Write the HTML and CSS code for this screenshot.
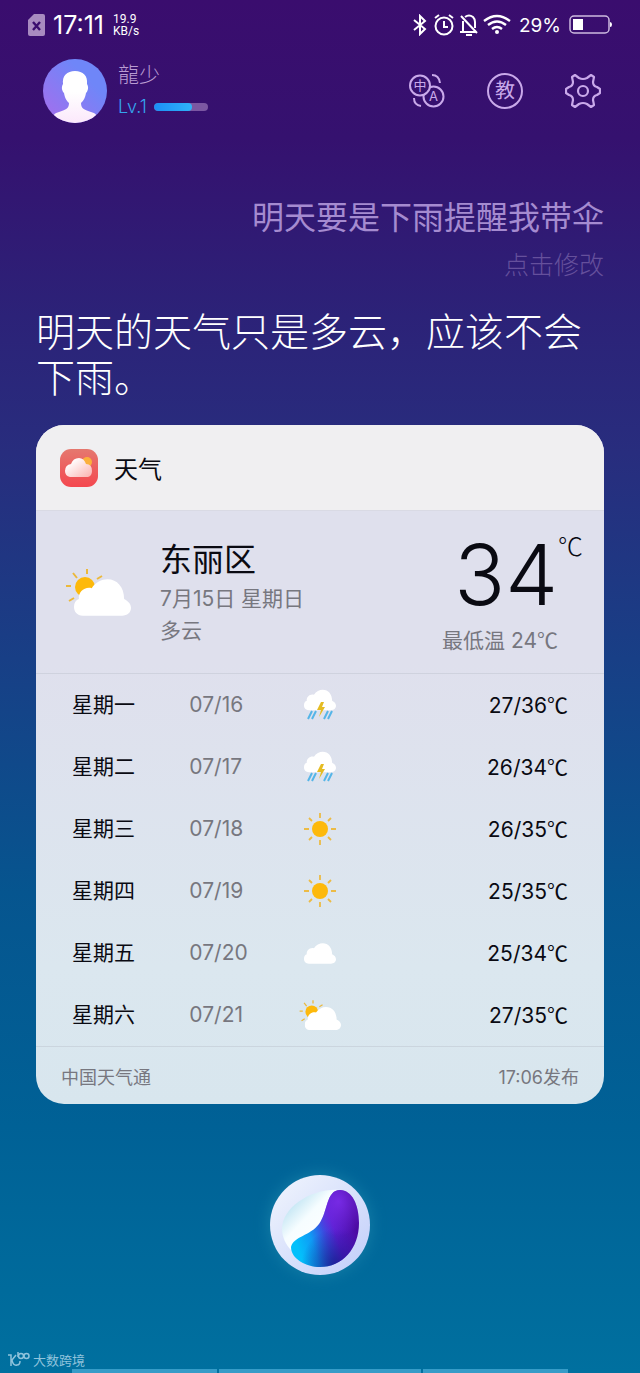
FILE: index.html
```html
<!DOCTYPE html>
<html lang="zh-CN">
<head>
    <meta charset="UTF-8">
    <meta name="viewport" content="width=device-width, initial-scale=1">
    <title>天气</title>
    <link rel="stylesheet" href="styles.css">
</head>
<body>

<!-- shared weather icons -->
<svg class="defs" width="0" height="0" aria-hidden="true">
    <defs>
        <symbol id="cloud" viewBox="0 0 58 37">
            <path fill="#fff" d="M9 37C3 37 0 33 0 28C0 24 2 21 5 20C4 13 11 7 18 9C22 3 28 0 34 0C44 0 51 8 51 20C55 22 58 25 58 29C58 34 54 37 49 37Z"/>
        </symbol>
        <symbol id="sunny" viewBox="0 0 32 32">
            <circle cx="16" cy="16" r="8" fill="#fdb90b"/>
            <path d="M16 0V5M16 27V32M0 16H5M27 16H32M5 5L8 8M24 24L27 27M5 27L8 24M24 8L27 5" stroke="#ecbb45" stroke-width="1.8" fill="none"/>
        </symbol>
        <symbol id="partly" viewBox="0 0 66 48">
            <circle cx="20" cy="19" r="10" fill="#fdb90b"/>
            <path d="M22 1V6M8 5L12 10M1 18H6M4 33L9 30M32 11L37 8" stroke="#ecb93c" stroke-width="2" fill="none"/>
            <use href="#cloud" x="9" y="11" width="57" height="37"/>
        </symbol>
        <symbol id="storm" viewBox="0 0 32 32">
            <use href="#cloud" x="0" y="0" width="32" height="22"/>
            <path d="M8 22L4 30M12 22L8 30M24 22L20 30M28 22L24 30" stroke="#55b5e8" stroke-width="2" fill="none"/>
            <path d="M17 13H20L18 18H21L15 28L17 21H13Z" fill="#e5bc22"/>
        </symbol>
    </defs>
</svg>

<div class="screen">
    <div class="status">
        <svg width="17" height="22" viewBox="0 0 17 22">
            <path fill="#a88bc0" d="M6 0H15Q17 0 17 2V20Q17 22 15 22H2Q0 22 0 20V6Z"/>
            <path d="M5 8L12 16M12 8L5 16" stroke="#3a0d6e" stroke-width="2.4"/>
        </svg>
        <span class="time">17:11</span>
        <div class="speed">
            <div>19.9</div>
            <div>KB/s</div>
        </div>
        <div class="signals">
            <svg width="16" height="22" viewBox="0 0 16 22" fill="none" stroke="#fff" stroke-width="2">
                <path d="M2 6L13 15L8 20V2L13 7L2 16"/>
            </svg>
            <svg width="22" height="22" viewBox="0 0 22 22" fill="none" stroke="#fff" stroke-width="2">
                <circle cx="11" cy="12" r="8.5"/>
                <path d="M11 7V13H15M2 4L6 1M20 4L16 1"/>
            </svg>
            <svg width="18" height="22" viewBox="0 0 18 22" fill="none" stroke="#fff" stroke-width="2">
                <path d="M0 18H16M3 18V7M5 3Q9 0 13 3Q15 5 15 8V14M1 2L17 19"/>
                <path d="M6 21H12"/>
            </svg>
            <svg width="28" height="22" viewBox="0 0 28 22" fill="none" stroke="#fff" stroke-width="2.4">
                <path d="M1 7Q14 -3 27 7M5 11Q14 4 23 11M9 15Q14 11 19 15"/>
                <circle cx="14" cy="18" r="2" fill="#fff" stroke="none"/>
            </svg>
            <span class="percent">29%</span>
            <svg width="44" height="20" viewBox="0 0 44 20">
                <rect x="1" y="1" width="39" height="17" rx="4" fill="none" stroke="#cdbbe0" stroke-width="1.5"/>
                <rect x="4" y="4" width="10" height="11" fill="#fff"/>
                <path d="M41 7Q43 7 43 9.500Q43 12 41 12Z" fill="#fff"/>
            </svg>
        </div>
    </div>

    <div class="header">
        <svg class="avatar" width="64" height="64" viewBox="0 0 64 64">
            <defs>
                <linearGradient id="face" x1="0" y1="1" x2="1" y2="0">
                    <stop offset="0.1" stop-color="#a070ee"/>
                    <stop offset="0.7" stop-color="#6f86f8"/>
                </linearGradient>
                <linearGradient id="body" x1="0" y1="0" x2="0" y2="1">
                    <stop offset="0.4" stop-color="#fff"/>
                    <stop offset="1" stop-color="#fbe8fb"/>
                </linearGradient>
                <clipPath id="round"><circle cx="32" cy="32" r="32"/></clipPath>
            </defs>
            <g clip-path="url(#round)">
                <rect width="64" height="64" fill="url(#face)"/>
                <path fill="url(#body)" d="M32 12C40 12 45 17 44 25C46 28 45 32 43 34C42 40 40 42 38 44C38 50 42 51 48 53C52 54 55 56 57 64H7C9 56 12 54 16 53C22 51 26 50 26 44C24 42 22 40 21 34C19 32 18 28 20 25C19 17 24 12 32 12Z"/>
            </g>
        </svg>
        <div class="user">
            <div class="name">龍少</div>
            <div class="level">
                <label for="exp">Lv.1</label>
                <progress id="exp" value="70" max="100"></progress>
            </div>
        </div>
        <div class="tools">
            <button type="button" aria-label="翻译">
                <svg width="36" height="36" viewBox="0 0 36 36" fill="none" stroke="#c9a9ea" stroke-width="2">
                    <circle cx="24.500" cy="23.500" r="10"/>
                    <circle cx="11" cy="12.500" r="10" fill="#36116f"/>
                    <path d="M23 2Q30 2 31 10M5 25Q5 32 12 33"/>
                    <text class="glyph" x="11" y="17" font-size="13">中</text>
                    <text class="glyph" x="24.500" y="28" font-size="13">A</text>
                </svg>
            </button>
            <button type="button" class="teach">教</button>
            <button type="button" aria-label="设置">
                <svg width="36" height="36" viewBox="0 0 36 36" fill="none" stroke="#c9a9ea" stroke-width="2.2" stroke-linejoin="round">
                    <path d="M10 2L14 5Q18 7 22 5L26 2L29 4L28 9Q28 13 32 14L35 16V20L32 22Q28 23 28 27L29 32L26 34L22 31Q18 29 14 31L10 34L7 32L8 27Q8 23 4 22L1 20V16L4 14Q8 13 8 9L7 4Z"/>
                    <circle cx="18" cy="18" r="5"/>
                </svg>
            </button>
        </div>
    </div>

    <div class="question">
        <p>明天要是下雨提醒我带伞</p>
        <button type="button">点击修改</button>
    </div>

    <p class="answer">明天的天气只是多云，应该不会下雨。</p>

    <div class="card">
        <div class="card-title">
            <svg width="38" height="38" viewBox="0 0 38 38">
                <defs>
                    <linearGradient id="app" x1="0" y1="0" x2="0" y2="1">
                        <stop offset="0" stop-color="#e5786f"/>
                        <stop offset="1" stop-color="#f4474f"/>
                    </linearGradient>
                    <linearGradient id="puff" x1="0" y1="0" x2="1" y2="1">
                        <stop offset="0.2" stop-color="#fff"/>
                        <stop offset="1" stop-color="#fbb0ae"/>
                    </linearGradient>
                </defs>
                <rect width="38" height="38" rx="11" fill="url(#app)"/>
                <circle cx="27" cy="13" r="5" fill="#fbb03c"/>
                <path fill="url(#puff)" d="M10 28Q5 27 5 22Q5 16 11 15Q13 9 19 9Q24 9 26 15Q32 15 32 22Q32 27 28 28Z"/>
            </svg>
            <h2>天气</h2>
        </div>

        <div class="today">
            <svg width="66" height="48"><use href="#partly"/></svg>
            <div class="place">
                <h1>东丽区</h1>
                <p>7月15日 星期日</p>
                <p>多云</p>
            </div>
            <div class="now">
                <div class="degrees">34<span class="unit">℃</span></div>
                <p>最低温 24<span class="c">℃</span></p>
            </div>
        </div>

        <table class="forecast">
            <tr>
                <th scope="row">星期一</th>
                <td class="date">07/16</td>
                <td class="icon"><svg width="32" height="32"><use href="#storm"/></svg></td>
                <td class="range">27/36<span class="c">℃</span></td>
            </tr>
            <tr>
                <th scope="row">星期二</th>
                <td class="date">07/17</td>
                <td class="icon"><svg width="32" height="32"><use href="#storm"/></svg></td>
                <td class="range">26/34<span class="c">℃</span></td>
            </tr>
            <tr>
                <th scope="row">星期三</th>
                <td class="date">07/18</td>
                <td class="icon"><svg width="32" height="32"><use href="#sunny"/></svg></td>
                <td class="range">26/35<span class="c">℃</span></td>
            </tr>
            <tr>
                <th scope="row">星期四</th>
                <td class="date">07/19</td>
                <td class="icon"><svg width="32" height="32"><use href="#sunny"/></svg></td>
                <td class="range">25/35<span class="c">℃</span></td>
            </tr>
            <tr>
                <th scope="row">星期五</th>
                <td class="date">07/20</td>
                <td class="icon"><svg width="32" height="21"><use href="#cloud"/></svg></td>
                <td class="range">25/34<span class="c">℃</span></td>
            </tr>
            <tr>
                <th scope="row">星期六</th>
                <td class="date">07/21</td>
                <td class="icon"><svg width="42" height="32"><use href="#partly"/></svg></td>
                <td class="range">27/35<span class="c">℃</span></td>
            </tr>
        </table>

        <div class="source">
            <span>中国天气通</span>
            <span>17:06发布</span>
        </div>
    </div>

    <button type="button" class="orb" aria-label="语音">
        <svg width="100" height="100" viewBox="0 0 100 100">
            <defs>
                <linearGradient id="disc" x1="0" y1="0" x2="1" y2="1">
                    <stop offset="0" stop-color="#f2f6fd"/>
                    <stop offset="1" stop-color="#c0cdfa"/>
                </linearGradient>
                <linearGradient id="drop" x1="0.8" y1="0.8" x2="0.2" y2="0.2">
                    <stop offset="0" stop-color="#fff"/>
                    <stop offset="0.6" stop-color="#f6fdff"/>
                    <stop offset="1" stop-color="#c4e6f4"/>
                </linearGradient>
                <linearGradient id="swirl" x1="0.1" y1="0.75" x2="0.95" y2="0.45">
                    <stop offset="0" stop-color="#03c0fb"/>
                    <stop offset="0.25" stop-color="#0f9bf5"/>
                    <stop offset="0.48" stop-color="#3b4be0"/>
                    <stop offset="0.65" stop-color="#5a1fd0"/>
                    <stop offset="1" stop-color="#4a0aa0"/>
                </linearGradient>
                <radialGradient id="shade" cx="0.65" cy="1" r="0.5">
                    <stop offset="0" stop-color="#12107c" stop-opacity="0.75"/>
                    <stop offset="1" stop-color="#12107c" stop-opacity="0"/>
                </radialGradient>
                <radialGradient id="glow" cx="0.7" cy="0.15" r="0.45">
                    <stop offset="0" stop-color="#8030f0" stop-opacity="0.8"/>
                    <stop offset="1" stop-color="#8030f0" stop-opacity="0"/>
                </radialGradient>
                <path id="wave" d="M70 15C82 15 89 30 89 48C89 74 72 92 50 92C36 92 21 84 21 72C24 61 40 61 49 49C58 37 56 15 70 15Z"/>
            </defs>
            <circle cx="50" cy="50" r="50" fill="url(#disc)"/>
            <path fill="url(#drop)" d="M70 15C42 13 12 32 12 54C12 62 16 70 21 75L60 55Z"/>
            <use href="#wave" fill="url(#swirl)"/>
            <use href="#wave" fill="url(#shade)"/>
            <use href="#wave" fill="url(#glow)"/>
        </svg>
    </button>

    <div class="brand">
        <svg width="22" height="16" viewBox="0 0 22 16" fill="none" stroke="#8fc3dc" stroke-width="1.5">
            <path d="M0 3H3V14M8 3L4 8Q5 14 9 13Q12 13 12 9"/>
            <path d="M10 0V5"/>
            <circle cx="13" cy="4" r="2.500"/>
            <circle cx="18.500" cy="4" r="2.500"/>
        </svg>
        <span>大数跨境</span>
    </div>
    <div class="tabs"><i></i><i></i><i></i></div>
</div>

</body>
</html>
```
FILE: styles.css
```css
* {
    box-sizing: border-box;
}
body {
    margin: 0;
    font-family: Inter, "Noto Sans CJK SC", sans-serif;
    color: #0a0a12;
}
h1, h2, p {
    margin: 0;
    font-weight: 400;
}
button {
    padding: 0;
    border: 0;
    background: none;
    font: inherit;
    color: inherit;
    cursor: pointer;
}
svg {
    display: block;
}
.defs {
    position: absolute;
}
.screen {
    display: flex;
    flex-direction: column;
    min-height: 100vh;
    background: linear-gradient(#3a0d6e 0, #35116f 10%, #2c2278 23%, #282d7e 33%, #183f86 48%, #06558f 65%, #006196 82%, #00709f 100%);
}

/* status bar */
.status {
    display: flex;
    align-items: center;
    height: 50px;
    padding: 0 27px 0 28px;
    color: #fff;
}
.time {
    margin-left: 8px;
    font-size: 25px;
}
.speed {
    margin-left: 9px;
    font-family: Roboto, sans-serif;
    font-size: 12px;
    line-height: 12px;
}
.signals {
    display: flex;
    align-items: center;
    gap: 5px;
    margin-left: auto;
}
.percent {
    margin: 0 3px;
    font-size: 19px;
}

/* user and tools */
.header {
    display: flex;
    align-items: center;
    padding: 9px 39px 0 43px;
}
.user {
    margin-left: 11px;
    color: #b99bd2;
}
.name {
    font-size: 21px;
    font-weight: 300;
    line-height: 32px;
}
.level {
    display: flex;
    align-items: center;
    gap: 7px;
    font-size: 18px;
    font-weight: 300;
    line-height: 32px;
    color: #35a5ee;
}
progress {
    width: 54px;
    height: 8px;
    border: 0;
    border-radius: 4px;
    overflow: hidden;
    appearance: none;
    background: #7b57a2;
}
progress::-webkit-progress-bar {
    background: #7b57a2;
}
progress::-webkit-progress-value {
    border-radius: 4px;
    background: linear-gradient(90deg, #1c8ff5, #2fb2f8);
}
.tools {
    display: flex;
    gap: 42px;
    margin-left: auto;
}
.glyph {
    fill: #c9a9ea;
    stroke: none;
    text-anchor: middle;
}
.teach {
    width: 36px;
    height: 36px;
    border: 2px solid #c9a9ea;
    border-radius: 50%;
    font-size: 20px;
    line-height: 30px;
    color: #c9a9ea;
}

/* dialogue */
.question {
    display: flex;
    flex-direction: column;
    align-items: flex-end;
    padding: 72px 36px 0;
    font-weight: 300;
    color: #a58bd0;
}
.question p {
    font-size: 32px;
    line-height: 46px;
}
.question button {
    font-size: 25px;
    line-height: 48px;
    color: #65509c;
}
.answer {
    padding: 20px 36px 24px;
    font-size: 39px;
    font-weight: 300;
    line-height: 46px;
    color: #fff;
}

/* weather card */
.card {
    margin: 0 36px;
    border-radius: 28px;
    overflow: hidden;
    background: linear-gradient(#dfe0ed 35%, #dbe7ef 80%, #d8e6ee);
}
.card-title {
    display: flex;
    align-items: center;
    gap: 16px;
    height: 85px;
    padding: 0 24px;
    background: #f0eff1;
}
.card-title h2 {
    font-size: 24px;
}
.today {
    display: flex;
    align-items: center;
    height: 164px;
    padding: 0 46px 0 29px;
    border-top: 1px solid #d9dae4;
    border-bottom: 1px solid #cfd2de;
    font-size: 21px;
    line-height: 32px;
    color: #77777f;
}
.place {
    margin-left: 29px;
}
.place h1 {
    font-size: 32px;
    line-height: 46px;
    color: #0a0a12;
}
.now {
    margin-left: auto;
    text-align: right;
}
.degrees {
    position: relative;
    font-size: 84px;
    font-weight: 300;
    line-height: 96px;
    color: #0a0a12;
}
.unit {
    position: absolute;
    left: 100%;
    top: 0;
    font-size: 25px;
    line-height: 36px;
}
.unit, .c {
    font-family: "Noto Sans CJK SC", sans-serif;
}
.forecast {
    width: 100%;
    border-collapse: collapse;
    table-layout: fixed;
    font-size: 21px;
}
.forecast th, .forecast td {
    height: 62px;
    padding: 0;
    line-height: 32px;
}
.forecast th {
    width: 27%;
    padding-left: 36px;
    font-weight: 400;
    text-align: left;
}
.forecast .date {
    width: 14%;
    color: #77777f;
}
.forecast .icon {
    width: 18%;
}
.forecast .icon svg {
    margin: 0 auto;
}
.forecast .range {
    padding-right: 36px;
    text-align: right;
}
.source {
    display: flex;
    align-items: center;
    justify-content: space-between;
    height: 58px;
    padding: 0 25px;
    border-top: 1px solid #cbd5de;
    font-size: 18px;
    color: #77777f;
}

/* bottom */
.orb {
    align-self: center;
    margin-top: 71px;
    border-radius: 50%;
    box-shadow: 0 0 16px #1680a8;
}
.brand {
    display: flex;
    align-items: center;
    gap: 3px;
    margin-top: auto;
    padding-left: 8px;
    font-size: 13px;
    line-height: 18px;
    color: #8fc3dc;
}
.tabs {
    display: flex;
    gap: 2px;
    padding: 0 72px;
}
.tabs i {
    flex: 1;
    height: 4px;
    background: #369cc8;
}
.tabs i:nth-child(2) {
    flex: 1.4;
}
```
